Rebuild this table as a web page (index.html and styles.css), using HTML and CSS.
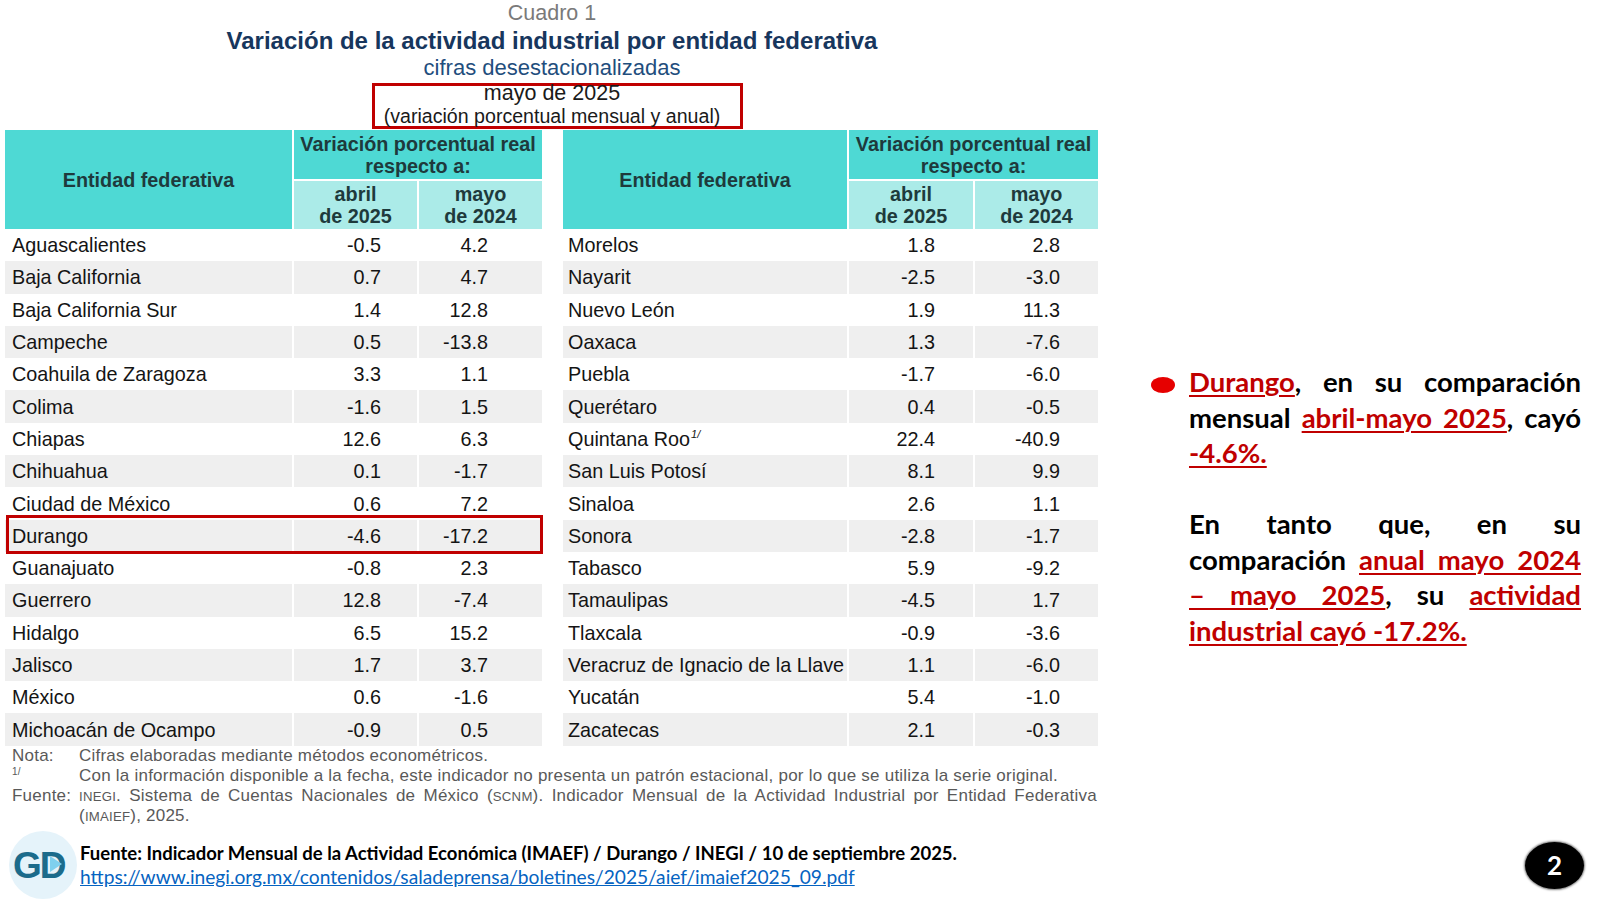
FILE: index.html
```html
<!DOCTYPE html>
<html lang="es">
<head>
<meta charset="utf-8">
<title>Variación de la actividad industrial por entidad federativa</title>
<link rel="stylesheet" href="styles.css">
</head>
<body>
<div class="page">
  <div class="top">
    <section class="left">
      <header class="caption">
        <div class="cuadro">Cuadro 1</div>
        <h1 class="title">Variación de la actividad industrial por entidad federativa</h1>
        <div class="subtitle">cifras desestacionalizadas</div>
        <div class="period-box">
          <div class="period">mayo de 2025<br><span class="period-sub">(variación porcentual mensual y anual)</span></div>
        </div>
      </header>
      <div class="tables">
        <div class="tbl-wrap tbl-left">
          <table class="data">
            <colgroup><col class="w-name-l"><col class="w-num"><col class="w-num"></colgroup>
            <thead>
              <tr class="hr1"><th rowspan="2" class="h-name">Entidad federativa</th><th colspan="2">Variación porcentual real<br>respecto a:</th></tr>
              <tr class="hr2"><th>abril<br>de 2025</th><th>mayo<br>de 2024</th></tr>
            </thead>
            <tbody>
              <tr><td class="name">Aguascalientes</td><td class="c2">-0.5</td><td class="c3">4.2</td></tr>
              <tr><td class="name">Baja California</td><td class="c2">0.7</td><td class="c3">4.7</td></tr>
              <tr><td class="name">Baja California Sur</td><td class="c2">1.4</td><td class="c3">12.8</td></tr>
              <tr><td class="name">Campeche</td><td class="c2">0.5</td><td class="c3">-13.8</td></tr>
              <tr><td class="name">Coahuila de Zaragoza</td><td class="c2">3.3</td><td class="c3">1.1</td></tr>
              <tr><td class="name">Colima</td><td class="c2">-1.6</td><td class="c3">1.5</td></tr>
              <tr><td class="name">Chiapas</td><td class="c2">12.6</td><td class="c3">6.3</td></tr>
              <tr><td class="name">Chihuahua</td><td class="c2">0.1</td><td class="c3">-1.7</td></tr>
              <tr><td class="name">Ciudad de México</td><td class="c2">0.6</td><td class="c3">7.2</td></tr>
              <tr><td class="name">Durango</td><td class="c2">-4.6</td><td class="c3">-17.2</td></tr>
              <tr><td class="name">Guanajuato</td><td class="c2">-0.8</td><td class="c3">2.3</td></tr>
              <tr><td class="name">Guerrero</td><td class="c2">12.8</td><td class="c3">-7.4</td></tr>
              <tr><td class="name">Hidalgo</td><td class="c2">6.5</td><td class="c3">15.2</td></tr>
              <tr><td class="name">Jalisco</td><td class="c2">1.7</td><td class="c3">3.7</td></tr>
              <tr><td class="name">México</td><td class="c2">0.6</td><td class="c3">-1.6</td></tr>
              <tr><td class="name">Michoacán de Ocampo</td><td class="c2">-0.9</td><td class="c3">0.5</td></tr>
            </tbody>
          </table>
          <div class="highlight"></div>
        </div>
        <div class="tbl-wrap tbl-right">
          <table class="data">
            <colgroup><col class="w-name-r"><col class="w-num"><col class="w-num-r"></colgroup>
            <thead>
              <tr class="hr1"><th rowspan="2" class="h-name">Entidad federativa</th><th colspan="2">Variación porcentual real<br>respecto a:</th></tr>
              <tr class="hr2"><th>abril<br>de 2025</th><th>mayo<br>de 2024</th></tr>
            </thead>
            <tbody>
              <tr><td class="name">Morelos</td><td class="c2">1.8</td><td class="c3">2.8</td></tr>
              <tr><td class="name">Nayarit</td><td class="c2">-2.5</td><td class="c3">-3.0</td></tr>
              <tr><td class="name">Nuevo León</td><td class="c2">1.9</td><td class="c3">11.3</td></tr>
              <tr><td class="name">Oaxaca</td><td class="c2">1.3</td><td class="c3">-7.6</td></tr>
              <tr><td class="name">Puebla</td><td class="c2">-1.7</td><td class="c3">-6.0</td></tr>
              <tr><td class="name">Querétaro</td><td class="c2">0.4</td><td class="c3">-0.5</td></tr>
              <tr><td class="name">Quintana Roo<sup class="fn">1/</sup></td><td class="c2">22.4</td><td class="c3">-40.9</td></tr>
              <tr><td class="name">San Luis Potosí</td><td class="c2">8.1</td><td class="c3">9.9</td></tr>
              <tr><td class="name">Sinaloa</td><td class="c2">2.6</td><td class="c3">1.1</td></tr>
              <tr><td class="name">Sonora</td><td class="c2">-2.8</td><td class="c3">-1.7</td></tr>
              <tr><td class="name">Tabasco</td><td class="c2">5.9</td><td class="c3">-9.2</td></tr>
              <tr><td class="name">Tamaulipas</td><td class="c2">-4.5</td><td class="c3">1.7</td></tr>
              <tr><td class="name">Tlaxcala</td><td class="c2">-0.9</td><td class="c3">-3.6</td></tr>
              <tr><td class="name">Veracruz de Ignacio de la Llave</td><td class="c2">1.1</td><td class="c3">-6.0</td></tr>
              <tr><td class="name">Yucatán</td><td class="c2">5.4</td><td class="c3">-1.0</td></tr>
              <tr><td class="name">Zacatecas</td><td class="c2">2.1</td><td class="c3">-0.3</td></tr>
            </tbody>
          </table>
        </div>
      </div>
      <div class="notes">
        <div class="nl">Nota:</div>
        <div>Cifras elaboradas mediante métodos econométricos.</div>
        <div class="nl"><span class="fnm">1/</span></div>
        <div>Con la información disponible a la fecha, este indicador no presenta un patrón estacional, por lo que se utiliza la serie original.</div>
        <div class="nl">Fuente:</div>
        <div class="just"><span class="sc">INEGI</span>. Sistema de Cuentas Nacionales de México (<span class="sc">SCNM</span>). Indicador Mensual de la Actividad Industrial por Entidad Federativa (<span class="sc">IMAIEF</span>), 2025.</div>
      </div>
    </section>
    <aside class="summary">
      <span class="bullet"></span>
      <div class="summary-text">
        <div class="ln"><span class="hl">Durango</span>, en su comparación</div>
        <div class="ln">mensual <span class="hl">abril-mayo 2025</span>, cayó</div>
        <div class="ln-last"><span class="hl">-4.6%.</span></div>
        <div class="ln-blank"></div>
        <div class="ln">En tanto que, en su</div>
        <div class="ln">comparación <span class="hl">anual mayo 2024</span></div>
        <div class="ln"><span class="hl">– mayo 2025</span>, su <span class="hl">actividad</span></div>
        <div class="ln-last"><span class="hl">industrial cayó -17.2%.</span></div>
      </div>
    </aside>
  </div>
  <footer class="footer">
    <svg class="logo" width="70" height="70" viewBox="0 0 70 70" aria-label="GD">
      <circle cx="35" cy="35" r="34" fill="#e5f3fa"/>
      <text x="5" y="48" class="logo-text">GD</text>
      <polygon points="42,26 54,34 42,42" fill="#7fd0ee"/>
    </svg>
    <div class="source">
      <div class="source-title">Fuente: Indicador Mensual de la Actividad Económica (IMAEF) / Durango / INEGI / 10 de septiembre 2025.</div>
      <a class="source-link" href="#">https://www.inegi.org.mx/contenidos/saladeprensa/boletines/2025/aief/imaief2025_09.pdf</a>
    </div>
    <div class="badge">2</div>
  </footer>
</div>
</body>
</html>
```
FILE: styles.css
```css
* { box-sizing: border-box; }

body {
  margin: 0;
  width: 1600px;
  height: 902px;
  overflow: hidden;
  background: #ffffff;
  font-family: "Liberation Sans", Arial, sans-serif;
  color: #141414;
}

.page {
  width: 1600px;
  height: 902px;
  display: flex;
  flex-direction: column;
}

.top {
  display: flex;
  height: 830px;
}

.left {
  width: 1100px;
  padding-left: 3px;
}

/* ---------- caption ---------- */
.caption {
  height: 130px;
  width: 1094px;
  margin-left: 2px;
  text-align: center;
}

.cuadro {
  font-size: 21.5px;
  line-height: 26px;
  color: #7a7a7a;
}

.title {
  margin: 0;
  font-size: 24px;
  line-height: 30px;
  font-weight: bold;
  color: #17365d;
}

.subtitle {
  font-size: 22px;
  line-height: 24px;
  color: #1f4e7d;
}

.period-box {
  margin: 3px 0 0 367px;
  width: 371px;
  height: 46px;
  border: 3px solid #c00000;
  padding-right: 11px;
  text-align: center;
}

.period {
  margin-top: -4px;
  font-size: 21.5px;
  line-height: 23px;
  color: #1a1a1a;
}

.period-sub {
  font-size: 19.6px;
}

/* ---------- tables ---------- */
.tables {
  display: flex;
  gap: 17px;
  height: 616px;
}

.tbl-wrap {
  position: relative;
}

.data {
  border-collapse: separate;
  border-spacing: 2px 0;
  table-layout: fixed;
  font-size: 19.8px;
}

.tbl-left .data { width: 541px; }
.tbl-right .data { width: 539px; }

.w-name-l { width: 287px; }
.w-name-r { width: 284px; }
.w-num { width: 124px; }
.w-num-r { width: 123px; }
.tbl-left .w-num { width: 123px; }

.data th {
  background: #4ed9d4;
  color: #1e3a3c;
  font-weight: bold;
  font-size: 19.8px;
  line-height: 22px;
  padding: 0;
  text-align: center;
}

.hr1 th { height: 49px; }

.hr2 th {
  height: 50px;
  background: #abebe8;
  border-top: 2px solid #ffffff;
}

.data td {
  height: 32.3px;
  padding: 0;
  line-height: 22px;
  white-space: nowrap;
  color: #141414;
}

.data tbody tr:nth-child(even) td {
  background: #efefef;
}

.name {
  text-align: left;
}

.tbl-left .name { padding-left: 7px !important; }
.tbl-right .name { padding-left: 5px !important; }

.c2, .c3 { text-align: right; }

.tbl-left .c2 { padding-right: 36px !important; }
.tbl-left .c3 { padding-right: 54px !important; }
.tbl-right .c2 { padding-right: 38px !important; }
.tbl-right .c3 { padding-right: 38px !important; }

.fn {
  font-size: 11px;
  font-style: italic;
  vertical-align: 8px;
  line-height: 0;
  margin-left: 1px;
}

.highlight {
  position: absolute;
  left: 3px;
  top: 385px;
  width: 537px;
  height: 39px;
  border: 3px solid #c00000;
  pointer-events: none;
}

/* ---------- notes ---------- */
.notes {
  margin-left: 9px;
  width: 1085px;
  display: grid;
  grid-template-columns: 67px 1fr;
  font-size: 17px;
  letter-spacing: 0.23px;
  line-height: 20px;
  color: #595959;
}

.fnm {
  font-size: 10px;
  vertical-align: top;
  line-height: 12px;
}

.just {
  text-align: justify;
}

.sc {
  font-size: 13.2px;
  line-height: 1;
}

/* ---------- summary ---------- */
.summary {
  flex: 1;
  display: flex;
  align-items: flex-start;
  padding-top: 364px;
  padding-left: 51px;
}

.bullet {
  flex: none;
  width: 24px;
  height: 16px;
  margin-top: 13px;
  margin-right: 14px;
  border-radius: 50%;
  background: #e60000;
}

.summary-text {
  width: 392px;
  font-family: Lato, "Liberation Sans", sans-serif;
  font-weight: bold;
  font-size: 27.5px;
  line-height: 35.5px;
  color: #000000;
}

.ln {
  text-align: justify;
  text-align-last: justify;
}

.ln-last { text-align: left; }

.ln-blank { height: 35.5px; }

.hl {
  color: #c00000;
  text-decoration: underline;
  text-decoration-thickness: 2px;
  text-underline-offset: 3px;
}

/* ---------- footer ---------- */
.footer {
  display: flex;
  align-items: center;
  height: 70px;
  padding-left: 8px;
  padding-right: 16px;
}

.logo {
  flex: none;
  display: block;
}

.logo-text {
  font-family: "Liberation Sans", Arial, sans-serif;
  font-weight: bold;
  font-size: 37px;
  letter-spacing: -2px;
  fill: #1b6b8b;
}

.source {
  margin-left: 2px;
  font-family: Lato, "Liberation Sans", sans-serif;
  font-size: 18.5px;
  line-height: 24.5px;
}

.source-title {
  font-weight: bold;
  color: #000000;
}

.source-link {
  font-size: 19.2px;
  color: #0563c1;
  text-decoration: underline;
}

.badge {
  margin-left: auto;
  width: 59px;
  height: 47px;
  border-radius: 50%;
  background: #000000;
  box-shadow: 0 0 2px 1px rgba(0,0,0,0.5);
  color: #ffffff;
  font-family: Lato, "Liberation Sans", sans-serif;
  font-weight: bold;
  font-size: 26px;
  display: flex;
  align-items: center;
  justify-content: center;
}
```
